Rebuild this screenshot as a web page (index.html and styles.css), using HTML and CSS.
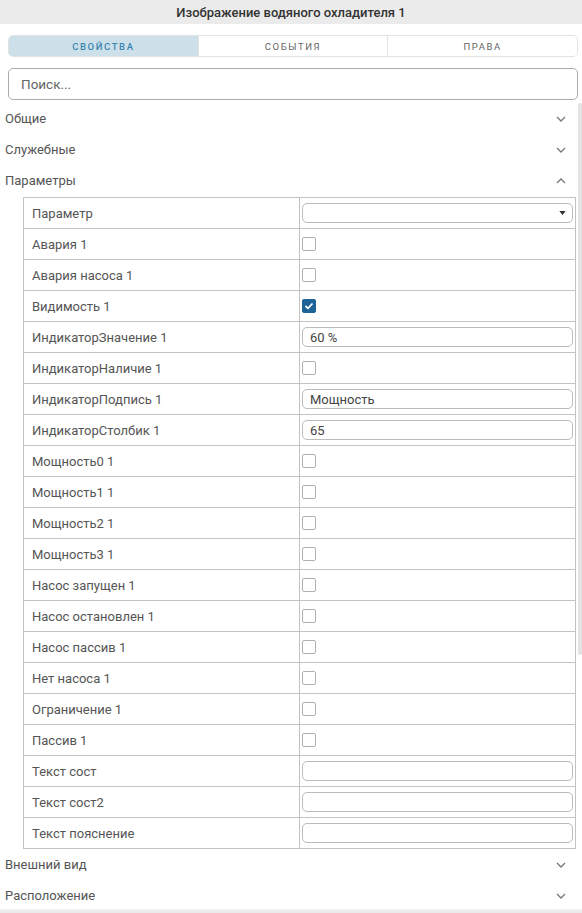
FILE: index.html
```html
<!doctype html>
<html>
    <head>
        <meta charset="utf-8">
        <title>Изображение водяного охладителя 1</title>
        <link rel="stylesheet" href="styles.css">
    </head>
    <body>
    <div class="panel">
        <div class="panel-title">Изображение водяного охладителя 1</div>

        <div class="tabs">
            <button class="tab active">Свойства</button>
            <button class="tab">События</button>
            <button class="tab">Права</button>
        </div>

        <div class="search">
            <input class="search-input" type="text" placeholder="Поиск...">
        </div>

        <div class="list">
            <div class="scroll-thumb"></div>

            <div class="group">
                <span>Общие</span>
                <svg class="chevron" width="10" height="6" viewBox="0 0 10 6"><polyline points="1,1 5,5 9,1"/></svg>
            </div>
            <div class="group">
                <span>Служебные</span>
                <svg class="chevron" width="10" height="6" viewBox="0 0 10 6"><polyline points="1,1 5,5 9,1"/></svg>
            </div>
            <div class="group">
                <span>Параметры</span>
                <svg class="chevron" width="10" height="6" viewBox="0 0 10 6"><polyline points="1,5 5,1 9,5"/></svg>
            </div>

            <table class="props">
                <tr>
                    <td class="prop-name">Параметр</td>
                    <td class="prop-value">
                        <div class="select">
                            <svg class="select-arrow" width="7" height="4" viewBox="0 0 8 5"><polygon points="0,0 8,0 4,5"/></svg>
                        </div>
                    </td>
                </tr>
                <tr>
                    <td class="prop-name">Авария 1</td>
                    <td class="prop-value"><span class="check"></span></td>
                </tr>
                <tr>
                    <td class="prop-name">Авария насоса 1</td>
                    <td class="prop-value"><span class="check"></span></td>
                </tr>
                <tr>
                    <td class="prop-name">Видимость 1</td>
                    <td class="prop-value">
                        <span class="check checked">
                            <svg width="10" height="8" viewBox="0 0 10 8"><polyline points="1.5,4 4,6.3 8.5,1.5"/></svg>
                        </span>
                    </td>
                </tr>
                <tr>
                    <td class="prop-name">ИндикаторЗначение 1</td>
                    <td class="prop-value"><input class="field" type="text" value="60 %"></td>
                </tr>
                <tr>
                    <td class="prop-name">ИндикаторНаличие 1</td>
                    <td class="prop-value"><span class="check"></span></td>
                </tr>
                <tr>
                    <td class="prop-name">ИндикаторПодпись 1</td>
                    <td class="prop-value"><input class="field" type="text" value="Мощность"></td>
                </tr>
                <tr>
                    <td class="prop-name">ИндикаторСтолбик 1</td>
                    <td class="prop-value"><input class="field" type="text" value="65"></td>
                </tr>
                <tr>
                    <td class="prop-name">Мощность0 1</td>
                    <td class="prop-value"><span class="check"></span></td>
                </tr>
                <tr>
                    <td class="prop-name">Мощность1 1</td>
                    <td class="prop-value"><span class="check"></span></td>
                </tr>
                <tr>
                    <td class="prop-name">Мощность2 1</td>
                    <td class="prop-value"><span class="check"></span></td>
                </tr>
                <tr>
                    <td class="prop-name">Мощность3 1</td>
                    <td class="prop-value"><span class="check"></span></td>
                </tr>
                <tr>
                    <td class="prop-name">Насос запущен 1</td>
                    <td class="prop-value"><span class="check"></span></td>
                </tr>
                <tr>
                    <td class="prop-name">Насос остановлен 1</td>
                    <td class="prop-value"><span class="check"></span></td>
                </tr>
                <tr>
                    <td class="prop-name">Насос пассив 1</td>
                    <td class="prop-value"><span class="check"></span></td>
                </tr>
                <tr>
                    <td class="prop-name">Нет насоса 1</td>
                    <td class="prop-value"><span class="check"></span></td>
                </tr>
                <tr>
                    <td class="prop-name">Ограничение 1</td>
                    <td class="prop-value"><span class="check"></span></td>
                </tr>
                <tr>
                    <td class="prop-name">Пассив 1</td>
                    <td class="prop-value"><span class="check"></span></td>
                </tr>
                <tr>
                    <td class="prop-name">Текст сост</td>
                    <td class="prop-value"><input class="field" type="text" value=""></td>
                </tr>
                <tr>
                    <td class="prop-name">Текст сост2</td>
                    <td class="prop-value"><input class="field" type="text" value=""></td>
                </tr>
                <tr>
                    <td class="prop-name">Текст пояснение</td>
                    <td class="prop-value"><input class="field" type="text" value=""></td>
                </tr>
            </table>

            <div class="group">
                <span>Внешний вид</span>
                <svg class="chevron" width="10" height="6" viewBox="0 0 10 6"><polyline points="1,1 5,5 9,1"/></svg>
            </div>
            <div class="group">
                <span>Расположение</span>
                <svg class="chevron" width="10" height="6" viewBox="0 0 10 6"><polyline points="1,1 5,5 9,1"/></svg>
            </div>
        </div>

        <div class="panel-foot"></div>
    </div>
    </body>
</html>
```

FILE: styles.css
```css
html, body {
    margin: 0;
    height: 100%;
    overflow: hidden;
}
body {
    font-family: Roboto, "Liberation Sans", sans-serif;
    font-size: 13px;
    color: #555;
    background: #fff;
}

.panel {
    display: flex;
    flex-direction: column;
    height: 100vh;
}

.panel-title {
    height: 24px;
    line-height: 26px;
    background: #ebebeb;
    text-align: center;
    font-size: 13px;
    font-weight: 500;
    color: #333;
    flex-shrink: 0;
}

.tabs {
    display: flex;
    margin: 11px 4px 0 8px;
    height: 22px;
    border: 1px solid #e2e2e2;
    border-radius: 5px;
    overflow: hidden;
    box-sizing: border-box;
    flex-shrink: 0;
}
.tab {
    flex: 1;
    border: none;
    border-left: 1px solid #e2e2e2;
    background: #fff;
    font-family: inherit;
    font-size: 9.5px;
    font-weight: 400;
    letter-spacing: 1.6px;
    text-transform: uppercase;
    color: #666;
    padding: 0;
}
.tab:first-child {
    border-left: none;
}
.tab.active {
    background: #cde0ea;
    color: #3a86b0;
    font-weight: 500;
}

.search {
    margin: 11px 4px 0 8px;
    flex-shrink: 0;
}
.search-input {
    display: block;
    width: 100%;
    height: 32px;
    box-sizing: border-box;
    border: 1px solid #aaa;
    border-radius: 5px;
    padding: 0 12px;
    font-family: inherit;
    font-size: 13.5px;
    color: #333;
    outline: none;
}
.search-input::placeholder {
    color: #666;
}

.list {
    position: relative;
    flex: 1;
    margin-top: 3px;
    overflow: hidden;
}
/* thin scroll handle drawn over the right edge of the list */
.scroll-thumb {
    position: absolute;
    top: 0;
    right: 0;
    width: 4px;
    height: 552px;
    background: #e3e3e3;
    border-radius: 2px;
}

.group {
    display: flex;
    align-items: center;
    justify-content: space-between;
    height: 31px;
    padding: 0 16px 0 5px;
    font-size: 13px;
    color: #555;
}
.chevron {
    fill: none;
    stroke: #777;
    stroke-width: 1.3;
}

.props {
    border-collapse: collapse;
    margin: 1px 6px 0 23px;
    width: calc(100% - 29px);
    table-layout: fixed;
}
.props td {
    border: 1px solid #c2c2c2;
    height: 31px;
    padding: 0;
    box-sizing: border-box;
}
.prop-name {
    width: 276px;
    padding-left: 8px !important;
    color: #555;
}
.prop-value {
    padding: 0 2px !important;
}

.check {
    display: block;
    width: 14px;
    height: 14px;
    box-sizing: border-box;
    border: 1.5px solid #b0b0b0;
    border-radius: 2px;
    background: #fff;
}
.check.checked {
    display: flex;
    align-items: center;
    justify-content: center;
    background: #1c6397;
    border-color: #1c6397;
}
.check svg {
    fill: none;
    stroke: #fff;
    stroke-width: 1.8;
}

.field,
.select {
    display: block;
    width: 100%;
    height: 20px;
    box-sizing: border-box;
    border: 1px solid #bbb;
    border-radius: 5px;
    padding: 0 7px;
    font-family: inherit;
    font-size: 13px;
    color: #444;
    background: #fff;
    outline: none;
}
.select {
    display: flex;
    align-items: center;
    justify-content: flex-end;
    padding-right: 6px;
}
.select-arrow {
    fill: #333;
}

.panel-foot {
    height: 4px;
    background: linear-gradient(#f4f4f4, #e8e8e8);
    flex-shrink: 0;
}
```
